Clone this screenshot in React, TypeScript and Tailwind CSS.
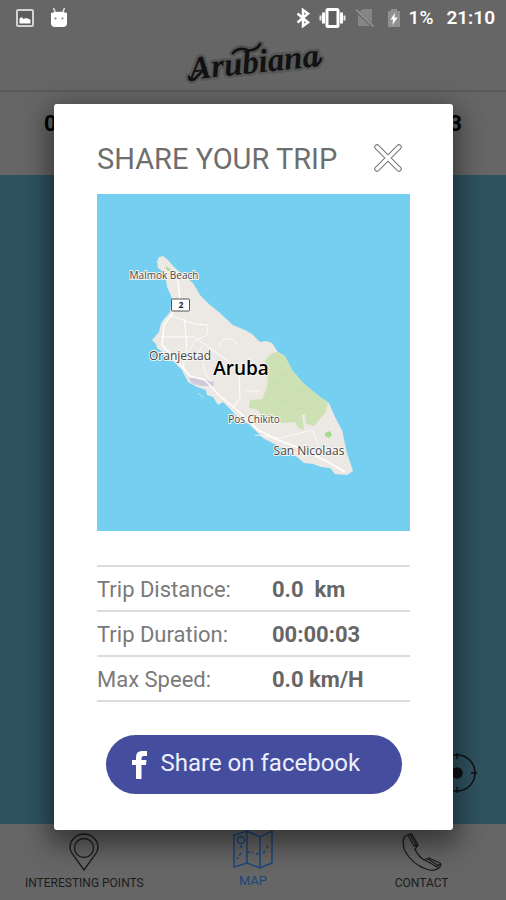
import React from "react";

function StatusBar() {
  return (
    <div className="flex h-9 items-center justify-between pr-[11px] pl-4 text-white">
      <div className="flex items-center gap-4">
        <svg className="h-[18px] w-[18px]" viewBox="0 0 18 18" aria-hidden="true">
          <rect x="1" y="1" width="16" height="16" rx="1" fill="#5c5c5c" stroke="#d2d2d2" strokeWidth="2" />
          <path d="M3.500 14.500v-5l2-1.500 2 2 2.500-1 3 1 1.500 1v3.500z" fill="#fff" />
        </svg>
        <svg className="h-5 w-[18px]" viewBox="0 0 18 20" aria-hidden="true">
          <path d="M3.500 0l2 5M14.500 0l-2 5" stroke="#e4e4e4" strokeWidth="1.500" />
          <path d="M1 5Q9 2.500 17 5V15Q17 19 13 19H5Q1 19 1 15Z" fill="#fff" />
          <circle cx="5.500" cy="10.500" r="1" fill="#777" />
          <circle cx="12.500" cy="10.500" r="1" fill="#777" />
        </svg>
      </div>
      <div className="flex items-center">
        <svg className="mr-2 h-5 w-4" viewBox="0 0 16 20" fill="none" stroke="#fff" strokeWidth="2.500" aria-hidden="true">
          <path d="M2.500 5.500L13 14.500L8 18V2L13 5.500L2.500 14.500" />
        </svg>
        <svg className="mr-[10px] h-5 w-[27px]" viewBox="0 0 27 20" fill="none" aria-hidden="true">
          <rect x="8" y="1.500" width="11" height="17" rx="1" fill="#5e5e5e" stroke="#fff" strokeWidth="3" />
          <path d="M4.500 4.500v11M22.500 4.500v11" stroke="#fff" strokeWidth="3" />
          <path d="M1.500 7.500v5M25.500 7.500v5" stroke="#e6e6e6" strokeWidth="2" />
        </svg>
        <svg className="mr-[13px] h-5 w-[18px]" viewBox="0 0 18 20" aria-hidden="true">
          <path d="M2 5L7 1H16V18H2Z" fill="#858585" />
          <path d="M0 2.500L17.500 19" stroke="#666" strokeWidth="3" />
          <path d="M0 1.500L17.500 18.500" stroke="#999" strokeWidth="1.500" />
        </svg>
        <svg className="mr-2 h-5 w-[14px]" viewBox="0 0 14 20" aria-hidden="true">
          <path d="M1 3H4V1H10V3H13V19H1Z" fill="#919191" />
          <path d="M8 5L3.500 11.500H6L5.500 17L10.500 9.500H7.500Z" fill="#fff" />
        </svg>
        <span className="mr-[13px] text-[19px] leading-5 font-medium">1%</span>
        <span className="text-[19px] leading-5 font-semibold">21:10</span>
      </div>
    </div>
  );
}

function Logo() {
  return (
    <svg className="h-[54px] w-[180px]" viewBox="0 0 180 54" role="img" aria-label="Arubiana">
      <g transform="rotate(-6 90 27)">
        <path
          d="M25 34Q25 39 30 37L42 27M71 15Q78 9 87 14Q95 15 99 9M151 36Q156 35 158 30"
          fill="none"
          stroke="#525252"
          strokeWidth="7"
          strokeLinecap="round"
        />
        <text
          x="91"
          y="37"
          textAnchor="middle"
          className="font-['Liberation_Serif',serif] text-[33px] font-bold italic"
          fill="#111"
          stroke="#575757"
          strokeWidth="5"
          strokeLinejoin="round"
          paintOrder="stroke"
        >
          Arubiana
        </text>
        <path
          d="M25 34Q25 39 30 37L42 27M71 15Q78 9 87 14Q95 15 99 9M151 36Q156 35 158 30"
          fill="none"
          stroke="#111"
          strokeWidth="2.500"
          strokeLinecap="round"
        />
      </g>
    </svg>
  );
}

function IslandMap() {
  return (
    <svg className="block w-full bg-[#74cff0]" viewBox="97 194 313 337" role="img" aria-label="Map of Aruba">
      <path
        d="M157 262L159 257L163 256L167 259L175 268L187 278L193 283L200 295L210 305L220 313L233 325L245 330L252 334L260 342L266 341L272 343L278 352L285 356L288 362L292 370L303 383L320 397L329 403L335 417L342 430L347 453L353 471L347 475L335 474L330 468L321 467L313 464L304 463L297 457L280 447L263 438L250 425L238 418L230 409L223 402L218 405L213 397L207 395L206 390L197 387L188 382L182 370L170 358L157 348L156 344L152 340L159 332L161 323L170 312L172 298L167 287L165 273L158 268Z"
        fill="#ece8e4"
      />
      <path
        d="M272 353L278 352L285 356L288 362L292 370L303 383L320 397L328 402L326 412L314 426L306 424L305 414L302 415L304 430L298 428L295 422L283 423L263 417L258 410L249 408L250 400L262 399L266 390L268 382L265 360Z"
        fill="#cde1b4"
      />
      <path d="M188 378L197 378L214 382L213 386L202 386L193 384Z" fill="#cfcbdc" />
      <path d="M325 433L330 431L332 435L329 438L325 436Z" fill="#a5dd8b" />
      <path d="M165 266L170 269L172 272L167 270Z" fill="#a5dd8b" />
      <path d="M198 393L204 398" stroke="#c4e3ea" />
      <g fill="none" stroke="#fff" strokeLinejoin="round">
        <path
          d="M177 272L180 300L173 313L164 325L162 345L178 362L190 376L205 380L220 396L237 410L258 430L278 440L302 449L330 463L345 472"
          strokeWidth="1.500"
        />
        <path d="M171 316L195 324L208 325M161 337H194L210 348L228 361L239 374L240 398L234 406M184 318L187 345L183 369" />
        <path d="M208 325L207 335L196 340L188 352M219 347Q220 337 229 339T236 344M203 345L194 359M203 360Q204 374 211 382M255 435L280 438L313 430L319 448M245 391H260" strokeOpacity=".7" />
      </g>
      <g stroke="#b9d4a5" strokeOpacity=".4" fill="none">
        <path d="M276 368L284 366M281 376L288 373M291 393L305 389M272 383L282 380M275 403L288 400M297 410L307 407" />
      </g>
      <rect x="171.500" y="299" width="18" height="12" rx="1" fill="#fff" stroke="#555" />
      <g
        className="font-['Open_Sans',sans-serif]"
        fill="#444"
        stroke="#f8f6f3"
        strokeWidth="2"
        strokeLinejoin="round"
        paintOrder="stroke"
        textAnchor="middle"
      >
        <text x="164" y="279" className="text-[10px]">Malmok Beach</text>
        <text x="180" y="360" className="text-[12px]">Oranjestad</text>
        <text x="254" y="423" className="text-[10px]">Pos Chikito</text>
        <text x="309" y="455" className="text-[12px]">San Nicolaas</text>
        <text x="241" y="375" className="text-[19px] font-semibold" fill="#000">Aruba</text>
        <text x="181" y="308" className="text-[8px] font-bold" fill="#222">2</text>
      </g>
    </svg>
  );
}

function CrosshairIcon() {
  return (
    <svg className="h-10 w-10" viewBox="0 0 40 40" fill="none" stroke="#111" strokeWidth="1.500" aria-hidden="true">
      <circle cx="20" cy="20" r="18" />
      <circle cx="20" cy="20" r="5" fill="#111" />
      <path d="M20 0v6M20 34v6M0 20h6M34 20h6" />
    </svg>
  );
}

function BottomNav() {
  return (
    <nav className="grid h-[76px] grid-cols-3 text-center text-[#1c1c1c]">
      <a href="#points" className="flex flex-col items-center pt-[9px]">
        <svg className="h-[38px] w-[30px]" viewBox="0 0 30 38" fill="none" stroke="currentColor" strokeWidth="1.300" aria-hidden="true">
          <path d="M15 37L5 23Q1 18 1 14.500A14 13.500 0 0 1 29 14.500Q29 18 25 23Z" />
          <circle cx="15" cy="15" r="9.500" />
        </svg>
        <span className="mt-1 text-[12px] leading-4">INTERESTING POINTS</span>
      </a>
      <a href="#map" className="flex flex-col items-center pt-[5px] text-[#1b477b]">
        <svg className="h-10 w-10" viewBox="0 0 40 40" fill="none" stroke="currentColor" strokeWidth="1.500" aria-hidden="true">
          <path d="M1 6L14 2L27 8L39 2V34L27 39L14 34L1 38ZM14 2V34M27 8V39" />
          <circle cx="8" cy="11" r="3.500" />
          <path d="M8 16v5M8 24l-4 6M14 23l6 1M23 25l4-1M30 24l3-3M34 19l1-5" strokeDasharray="3 2" />
        </svg>
        <span className="mt-1 text-[13px] leading-4">MAP</span>
      </a>
      <a href="#contact" className="flex flex-col items-center pt-[9px]">
        <svg className="h-[38px] w-10" viewBox="0 0 40 38" fill="none" stroke="currentColor" strokeWidth="1.300" strokeLinejoin="round" aria-hidden="true">
          <path d="M2 4L8 1Q10 1 11 3L16 12L13 16Q15 22 22 27L27 25L38 30Q40 32 37 35Q32 39 24 36Q10 31 3 18Q0 11 2 4Z" />
          <path d="M6 2L12 13L16 12M8 1L14 12M23 27L35 34L38 31M26 26L37 33" />
        </svg>
        <span className="mt-1 text-[12px] leading-4">CONTACT</span>
      </a>
    </nav>
  );
}

const trip = [
  { label: "Trip Distance:", value: "0.0  km" },
  { label: "Trip Duration:", value: "00:00:03" },
  { label: "Max Speed:", value: "0.0 km/H" },
];

function ShareDialog() {
  return (
    <section
      role="dialog"
      aria-modal="true"
      aria-labelledby="share-title"
      className="w-full rounded-[3px] bg-white px-[43px] pt-9 pb-9 shadow-[0_10px_26px_6px_rgba(0,0,0,0.45)]"
    >
      <header className="flex h-9 items-center justify-between pr-2">
        <h1 id="share-title" className="pt-0.5 text-[29px] leading-9 font-normal text-[#6e6e6e]">
          SHARE YOUR TRIP
        </h1>
        <button type="button" aria-label="Close">
          <svg className="h-7 w-7" viewBox="0 0 28 28" aria-hidden="true">
            <g fill="none" strokeLinecap="round">
              <path d="M3 3L25 25M25 3L3 25" stroke="#777" strokeWidth="5.500" />
              <path d="M3 3L25 25M25 3L3 25" stroke="#fff" strokeWidth="3.500" />
            </g>
          </svg>
        </button>
      </header>
      <div className="mt-[18px]">
        <IslandMap />
      </div>
      <table className="mt-[34px] w-full border-collapse text-left text-[22px] leading-7 text-[#666]">
        <tbody>
          {trip.map((row) => (
            <tr key={row.label} className="h-[45px] border-y-2 border-[#dcdcdc]">
              <th scope="row" className="w-[175px] p-0 pt-0.5 font-normal text-[#7a7a7a]">
                {row.label}
              </th>
              <td className="p-0 pt-0.5 font-bold whitespace-pre">{row.value}</td>
            </tr>
          ))}
        </tbody>
      </table>
      <button
        type="button"
        className="mx-auto mt-[33px] flex h-[59px] w-[296px] items-center rounded-full bg-[#444d9e] pl-[26px] text-2xl text-[#eceefb]"
      >
        <svg className="mr-[14px] h-7 w-[15px]" viewBox="0 0 15 28" fill="#fff" aria-hidden="true">
          <path d="M4 28V14H0V9H4V6Q4 0 10 0H15V5H12Q9.500 5 9.500 7V9H14.500L14 14H9.500V28Z" />
        </svg>
        <span className="pb-1">Share on facebook</span>
      </button>
    </section>
  );
}

export default function App() {
  return (
    <div className="relative flex min-h-screen flex-col bg-[#666] font-[Roboto,sans-serif]">
      <header className="border-b-2 border-[#5a5a5a]">
        <StatusBar />
        <div className="flex justify-center">
          <Logo />
        </div>
      </header>
      <div className="flex h-[83px] justify-between px-11 pt-4 text-[22px] leading-8 font-bold text-black">
        <span>0.0</span>
        <span>00:00:03</span>
      </div>
      <main className="flex flex-1 items-end justify-end bg-[#2e5360] pr-[29px] pb-[31px]">
        <button type="button" aria-label="Locate me">
          <CrosshairIcon />
        </button>
      </main>
      <BottomNav />
      <div className="absolute inset-0 flex items-start justify-center pt-[104px] pr-[53px] pl-[54px]">
        <ShareDialog />
      </div>
    </div>
  );
}
